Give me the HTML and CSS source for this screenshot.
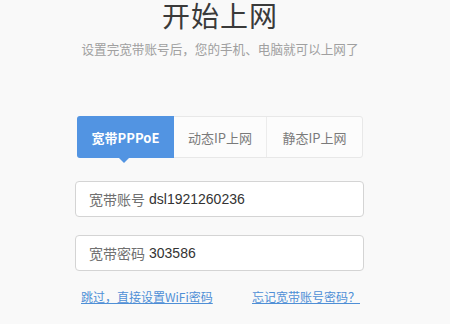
FILE: index.html
```html
<!DOCTYPE html>
<html lang="zh-CN">
<head>
<meta charset="utf-8">
<link rel="stylesheet" href="styles.css">
</head>
<body>
<div class="page">
  <h1 class="title">开始上网</h1>
  <p class="subtitle">设置完宽带账号后，您的手机、电脑就可以上网了</p>
  <div class="tabs">
    <div class="tab tab-active">宽带PPPoE</div>
    <div class="tab tab-mid">动态IP上网</div>
    <div class="tab tab-last">静态IP上网</div>
  </div>
  <div class="field field-first"><span class="label">宽带账号</span><span class="value">dsl1921260236</span></div>
  <div class="field"><span class="label">宽带密码</span><span class="value">303586</span></div>
  <div class="links">
    <a class="link" href="#">跳过，直接设置WiFi密码</a>
    <a class="link" href="#">忘记宽带账号密码？</a>
  </div>
</div>
</body>
</html>
```
FILE: styles.css
```css
html, body {
  margin: 0;
  padding: 0;
  background: #f9f9f9;
}
body {
  font-family: "Noto Sans CJK SC", "Liberation Sans", sans-serif;
  width: 450px;
  height: 324px;
  overflow: hidden;
}
.page {
  width: 290px;
  margin-left: 75px;
  display: flex;
  flex-direction: column;
}
.title {
  margin: 0;
  font-size: 28px;
  font-weight: normal;
  line-height: 31px;
  color: #3a3a3a;
  text-align: center;
  letter-spacing: 1px;
}
.subtitle {
  margin: 11px -20px 0 -20px;
  font-size: 12.6px;
  line-height: 14px;
  color: #a0a0a0;
  text-align: center;
}
.tabs {
  margin-top: 60px;
  margin-left: 2px;
  width: 286px;
  height: 42px;
  display: flex;
  box-sizing: border-box;
  border: 1px solid #e8e8e8;
  border-radius: 3px;
  background: #fcfcfc;
}
.tab {
  display: flex;
  align-items: center;
  justify-content: center;
  font-size: 13px;
  color: #7a7a7a;
  box-sizing: border-box;
}
.tab-active {
  position: relative;
  width: 97px;
  margin: -1px 0 -1px -1px;
  background: #5294e2;
  color: #ffffff;
  font-weight: bold;
  border-radius: 3px 0 0 3px;
}
.tab-active::after {
  content: "";
  position: absolute;
  left: 42px;
  bottom: -5px;
  border-left: 5px solid transparent;
  border-right: 5px solid transparent;
  border-top: 5px solid #5294e2;
}
.tab-mid {
  width: 93px;
  border-right: 1px solid #ececec;
}
.tab-last {
  flex: 1;
}
.field {
  height: 36px;
  box-sizing: border-box;
  margin-top: 18px;
  width: 289px;
  background: #ffffff;
  border: 1px solid #d4d4d4;
  border-radius: 4px;
  display: flex;
  align-items: center;
  padding-left: 13px;
  font-size: 14px;
}
.field-first {
  margin-top: 23px;
}
.label {
  color: #707070;
  margin-right: 4px;
}
.value {
  font-family: "Liberation Sans", sans-serif;
  color: #333333;
  font-size: 14px;
}
.links {
  margin-top: 18px;
  display: flex;
  justify-content: space-between;
  padding: 0 5px 0 6px;
}
.link {
  font-size: 12px;
  line-height: 16px;
  color: #4f8fd6;
  text-decoration: underline;
}
```
